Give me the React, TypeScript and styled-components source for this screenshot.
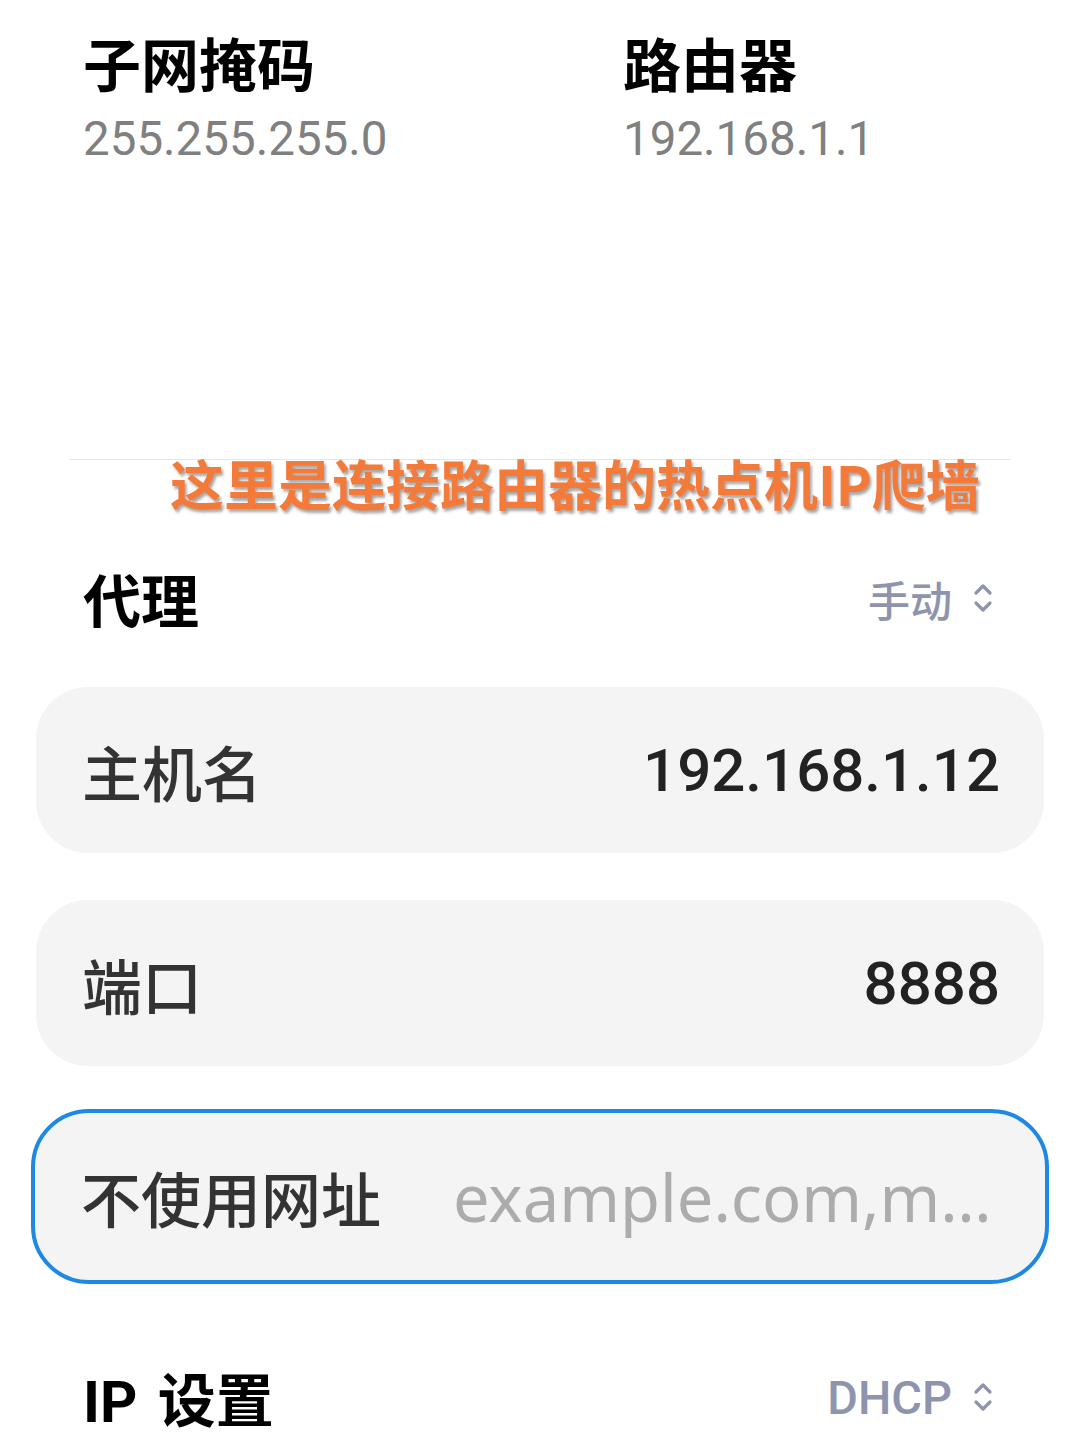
import React from 'react'
import styled, { createGlobalStyle } from 'styled-components'

const GlobalStyle = createGlobalStyle`
  body {
    margin: 0;
    background: #ffffff;
    font-family: Roboto, "Noto Sans", "Noto Sans CJK SC", sans-serif;
  }
`

const Page = styled.div`
  width: 1080px;
  height: 1441px;
  overflow: hidden;
  background: #ffffff;
`

const InfoGrid = styled.div`
  display: grid;
  grid-template-columns: 540px 1fr;
  padding: 26px 0 0 83px;
  height: 459px;
  box-sizing: border-box;
`

const InfoItem = styled.div`
  display: flex;
  flex-direction: column;
  gap: 10px;
`

const InfoTitle = styled.div`
  font-family: "Noto Sans CJK SC", sans-serif;
  font-size: 58px;
  line-height: 73px;
  font-weight: 700;
  color: #000000;
`

const InfoValue = styled.div`
  font-family: Roboto, "Noto Sans", sans-serif;
  font-size: 47.5px;
  line-height: 60px;
  color: #808080;
`

const Divider = styled.div`
  height: 1px;
  margin: 0 70px;
  background: #e6e6e6;
`

const Annotation = styled.div`
  padding-left: 170px;
  font-family: "Noto Sans CJK SC", sans-serif;
  font-size: 54px;
  line-height: 46px;
  font-weight: 700;
  color: #f47a3a;
  text-shadow: 2px 3px 3px rgba(0, 0, 0, 0.35);
  white-space: nowrap;
`

const SectionRow = styled.div<{ $top: number }>`
  display: flex;
  align-items: center;
  justify-content: space-between;
  height: 120px;
  margin-top: ${(p) => p.$top}px;
  padding: 0 86px 0 83px;
`

const SectionTitle = styled.div`
  font-family: Roboto, "Noto Sans CJK SC", sans-serif;
  font-size: 58px;
  font-weight: 700;
  color: #000000;
  word-spacing: 6px;
`

const Picker = styled.div<{ $latin?: boolean }>`
  display: flex;
  align-items: center;
  gap: 20px;
  font-family: ${(p) => (p.$latin ? 'Roboto, "Noto Sans", sans-serif' : '"Noto Sans CJK SC", sans-serif')};
  font-size: ${(p) => (p.$latin ? 47 : 42)}px;
  font-weight: 500;
  color: #8e94ad;
`

const CardStack = styled.div`
  display: flex;
  flex-direction: column;
  gap: 47px;
  margin-top: 29px;
  & > :last-child {
    margin-top: -4px;
  }
`

const Card = styled.div<{ $focused?: boolean }>`
  display: flex;
  align-items: center;
  justify-content: space-between;
  box-sizing: border-box;
  height: ${(p) => (p.$focused ? 175 : 166)}px;
  margin: 0 ${(p) => (p.$focused ? 31 : 36)}px;
  padding: 0 ${(p) => (p.$focused ? 45 : 44)}px 0 46px;
  background: #f4f4f4;
  border-radius: ${(p) => (p.$focused ? 58 : 52)}px;
  border: ${(p) => (p.$focused ? '4px solid #1e88e5' : 'none')};
`

const CardLabel = styled.div`
  flex-shrink: 0;
  font-family: "Noto Sans CJK SC", sans-serif;
  font-size: 60px;
  font-weight: 500;
  color: #333333;
`

const CardValue = styled.div`
  font-family: Roboto, "Noto Sans", sans-serif;
  font-size: 60px;
  font-weight: 500;
  color: #222222;
`

const Placeholder = styled.div`
  flex: 1;
  min-width: 0;
  margin-left: 72px;
  overflow: hidden;
  white-space: nowrap;
  font-family: "Noto Sans", Roboto, sans-serif;
  font-size: 65px;
  color: #acacac;
`

const Chevrons = () => (
  <svg width="22" height="32" viewBox="0 0 22 32" fill="none" stroke="currentColor" strokeWidth="3.2" strokeLinecap="round" strokeLinejoin="round">
    <path d="M4 11 L11 4 L18 11" />
    <path d="M4 21 L11 28 L18 21" />
  </svg>
)

const App = () => {
  return (
    <Page>
      <GlobalStyle />
      <InfoGrid>
        <InfoItem>
          <InfoTitle>子网掩码</InfoTitle>
          <InfoValue>255.255.255.0</InfoValue>
        </InfoItem>
        <InfoItem>
          <InfoTitle>路由器</InfoTitle>
          <InfoValue>192.168.1.1</InfoValue>
        </InfoItem>
      </InfoGrid>
      <Divider />
      <Annotation>这里是连接路由器的热点机IP爬墙</Annotation>
      <SectionRow $top={32}>
        <SectionTitle>代理</SectionTitle>
        <Picker>
          手动
          <Chevrons />
        </Picker>
      </SectionRow>
      <CardStack>
        <Card>
          <CardLabel>主机名</CardLabel>
          <CardValue>192.168.1.12</CardValue>
        </Card>
        <Card>
          <CardLabel>端口</CardLabel>
          <CardValue>8888</CardValue>
        </Card>
        <Card $focused>
          <CardLabel>不使用网址</CardLabel>
          <Placeholder>example.com,m…</Placeholder>
        </Card>
      </CardStack>
      <SectionRow $top={53}>
        <SectionTitle>IP 设置</SectionTitle>
        <Picker $latin>
          DHCP
          <Chevrons />
        </Picker>
      </SectionRow>
    </Page>
  )
}

export default App
